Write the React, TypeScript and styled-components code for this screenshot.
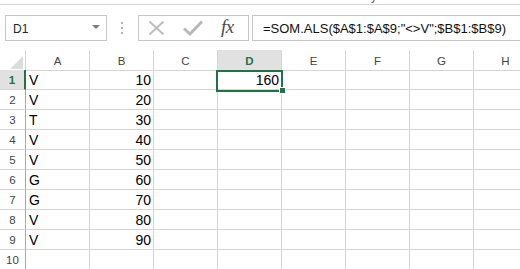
import React from "react";
import styled, { createGlobalStyle, css } from "styled-components";

const Global = createGlobalStyle`
  html, body { margin: 0; padding: 0; background: #ffffff; overflow: hidden; }
  body { font-family: "Liberation Sans", Arial, sans-serif; }
`;

const GREEN = "#217346";
const GRID = "#d4d4d4";

const Page = styled.div`
  width: 520px;
  height: 269px;
  overflow: hidden;
  position: relative;
`;

const TitleStrip = styled.div`
  height: 4px;
  border-bottom: 1px solid #d5d5d5;
  overflow: hidden;
  position: relative;
`;

const TitleFragment = styled.span`
  position: absolute;
  left: 371px;
  top: -11px;
  font-size: 12px;
  line-height: 14px;
  color: #555;
`;

const FormulaBar = styled.div`
  display: flex;
  align-items: stretch;
  height: 26px;
  margin-top: 10px;
  padding-left: 5px;
`;

const NameBox = styled.div`
  box-sizing: border-box;
  width: 102px;
  border: 1px solid #c6c6c6;
  display: flex;
  align-items: center;
  justify-content: space-between;
  padding: 1px 6px 0 7px;
  font-size: 12px;
  color: #262626;
`;

const DropArrow = styled.span`
  width: 0;
  height: 0;
  border-left: 4px solid transparent;
  border-right: 4px solid transparent;
  border-top: 4px solid #7a7a7a;
  margin-top: -3px;
`;

const Grip = styled.div`
  width: 30px;
  display: flex;
  flex-direction: column;
  align-items: center;
  justify-content: center;
  gap: 3px;
  padding-right: 1px;
`;

const GripDot = styled.span`
  width: 2px;
  height: 2px;
  background: #b4b4b4;
`;

const ButtonsBox = styled.div`
  box-sizing: border-box;
  width: 111px;
  border: 1px solid #c6c6c6;
  display: flex;
  align-items: center;
  padding-left: 9px;
  gap: 18px;
`;

const FxText = styled.span`
  font-family: "Liberation Serif", "Times New Roman", serif;
  font-style: italic;
  font-size: 19px;
  color: #4a4a4a;
  margin-top: -2px;
  letter-spacing: -0.5px;
`;

const FormulaInput = styled.div`
  box-sizing: border-box;
  flex: 1;
  margin-left: 3px;
  margin-right: -10px;
  border: 1px solid #c6c6c6;
  display: flex;
  align-items: center;
  padding: 1px 0 0 10px;
  font-size: 13px;
  color: #111;
  white-space: nowrap;
`;

const Sheet = styled.div`
  position: relative;
  margin-top: 9px;
  display: grid;
  grid-template-columns: 26px repeat(8, 64px);
  grid-auto-rows: 20px;
  width: 538px;
`;

const Cell = styled.div<{ $align?: "left" | "right" }>`
  box-sizing: border-box;
  border-right: 1px solid ${GRID};
  border-bottom: 1px solid ${GRID};
  font-size: 14px;
  line-height: 19px;
  padding: 1px 2px 0 3px;
  color: #000;
  white-space: nowrap;
  overflow: hidden;
  text-align: ${(p) => (p.$align === "right" ? "right" : "left")};
`;

const ColHeader = styled.div<{ $active?: boolean }>`
  box-sizing: border-box;
  height: 21px;
  border-right: 1px solid ${GRID};
  border-bottom: 1px solid ${GRID};
  font-size: 11.5px;
  line-height: 20px;
  padding-top: 1px;
  text-align: center;
  color: #444;
  ${(p) =>
    p.$active &&
    css`
      background: #e1e1e1;
      color: ${GREEN};
      font-weight: bold;
      border-bottom-color: ${GREEN};
    `}
`;

const Corner = styled.div`
  box-sizing: border-box;
  height: 21px;
  border-right: 1px solid ${GRID};
  border-bottom: 1px solid ${GRID};
  display: flex;
  align-items: flex-end;
  justify-content: flex-end;
`;

const RowHeader = styled.div<{ $active?: boolean }>`
  box-sizing: border-box;
  border-right: 1px solid #a8a8a8;
  border-bottom: 1px solid ${GRID};
  font-size: 11.5px;
  line-height: 19px;
  padding-top: 1px;
  text-align: center;
  color: #444;
  ${(p) =>
    p.$active &&
    css`
      background: #e1e1e1;
      color: ${GREEN};
      font-weight: bold;
      border-right: 2px solid ${GREEN};
    `}
`;

const Selection = styled.div`
  position: absolute;
  left: 216px;
  top: 20px;
  width: 67px;
  height: 22px;
  box-sizing: border-box;
  border: 2px solid ${GREEN};
  pointer-events: none;
`;

const FillHandle = styled.div`
  position: absolute;
  left: 279px;
  top: 37px;
  width: 7px;
  height: 7px;
  box-sizing: border-box;
  background: ${GREEN};
  border: 1px solid #fff;
`;

const columns = ["A", "B", "C", "D", "E", "F", "G", "H"];
const data: [string, number][] = [
  ["V", 10],
  ["V", 20],
  ["T", 30],
  ["V", 40],
  ["V", 50],
  ["G", 60],
  ["G", 70],
  ["V", 80],
  ["V", 90],
];

export default function App() {
  const rows = Array.from({ length: 10 }, (_, i) => i + 1);
  return (
    <Page>
      <Global />
      <TitleStrip>
        <TitleFragment>y</TitleFragment>
      </TitleStrip>
      <FormulaBar>
        <NameBox>
          <span>D1</span>
          <DropArrow />
        </NameBox>
        <Grip>
          <GripDot />
          <GripDot />
          <GripDot />
        </Grip>
        <ButtonsBox>
          <svg width="17" height="16" viewBox="0 0 17 16">
            <path d="M1.5 1.5 L15.5 14.5 M15.5 1.5 L1.5 14.5" stroke="#bdbdbd" strokeWidth="2" fill="none" />
          </svg>
          <svg width="20" height="16" viewBox="0 0 20 16">
            <path d="M1 8.5 L7 14 L19 1.5" stroke="#b8b8b8" strokeWidth="3" fill="none" />
          </svg>
          <FxText>fx</FxText>
        </ButtonsBox>
        <FormulaInput>=SOM.ALS($A$1:$A$9;"&lt;&gt;V";$B$1:$B$9)</FormulaInput>
      </FormulaBar>
      <Sheet>
        <Corner>
          <svg width="16" height="16" viewBox="0 0 16 16">
            <polygon points="14,2 14,15 1,15" fill="#dcdcdc" />
          </svg>
        </Corner>
        {columns.map((c) => (
          <ColHeader key={c} $active={c === "D"}>
            {c}
          </ColHeader>
        ))}
        {rows.map((r) => {
          const d = data[r - 1];
          return (
            <React.Fragment key={r}>
              <RowHeader $active={r === 1}>{r}</RowHeader>
              <Cell>{d ? d[0] : ""}</Cell>
              <Cell $align="right">{d ? d[1] : ""}</Cell>
              <Cell />
              <Cell $align="right">{r === 1 ? 160 : ""}</Cell>
              <Cell />
              <Cell />
              <Cell />
              <Cell />
            </React.Fragment>
          );
        })}
        <Selection />
        <FillHandle />
      </Sheet>
    </Page>
  );
}
